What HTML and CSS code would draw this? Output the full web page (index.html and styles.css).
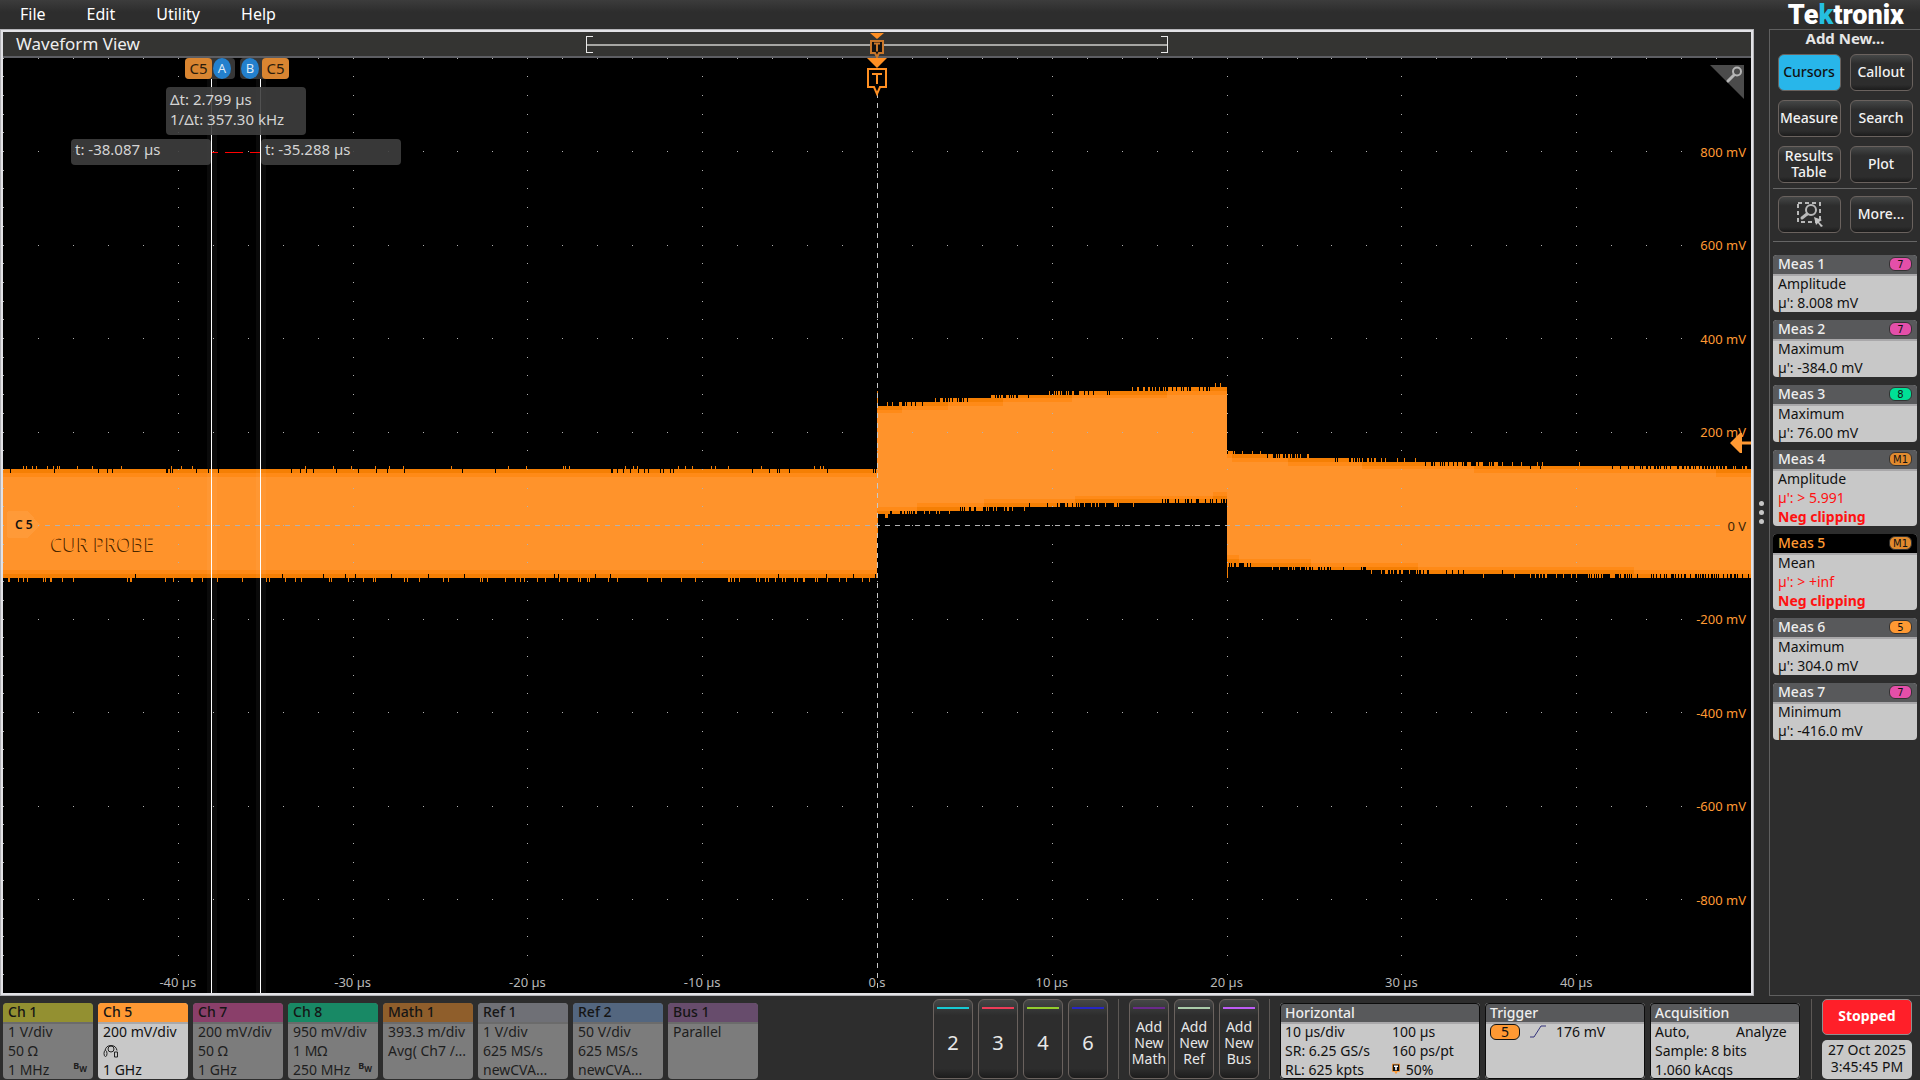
FILE: index.html
```html
<!DOCTYPE html>
<html lang="en">
<head>
    <meta charset="UTF-8">
    <meta name="viewport" content="width=device-width, initial-scale=1.0">
    <title>Waveform View</title>
    <link rel="stylesheet" href="styles.css">
</head>
<body>
    <header class="topbar">
        <nav class="menu">
            <button>File</button>
            <button>Edit</button>
            <button>Utility</button>
            <button>Help</button>
        </nav>
        <div class="logo">Te<span class="logo-k">k</span>tronix</div>
    </header>

    <main class="workspace">
        <section class="scope">
            <div class="scope-title">
                <h1>Waveform View</h1>
                <div class="record">
                    <svg class="record-trigger" width="16" height="26" viewBox="0 0 16 26">
                        <path d="M1 1h14l-7 6z" fill="#ff8f22"/>
                        <path d="M2 9h12v12h-4l-2 4l-2-4h-4z" fill="#111" stroke="#c9772a" stroke-width="2"/>
                        <path d="M5 11.500h6M8 11.500v8" stroke="#c9772a" stroke-width="2"/>
                    </svg>
                </div>
            </div>
            <div class="plot">
                <svg class="trace" viewBox="0 0 1748 935" preserveAspectRatio="none" shape-rendering="crispEdges">
                    <path id="wave-edge" fill="#f57f04"/>
                    <path id="wave-mid" fill="#ff8a17"/>
                    <path id="wave-core" fill="#ff932b"/>
                    <path d="M4 456q0-3 3-3h18l12 14l-12 13h-18q-3 0-3-3z" fill="#ff9a38"/>
                    <path id="grid-dots" fill="#b2b2b2"/>
                    <path d="M42 467.500H1718" stroke="#b2b2b2" stroke-dasharray="5 5"/>
                    <path d="M874.500 35V935" stroke="#c8c8c8" stroke-dasharray="5 5"/>
                    <path d="M204 0h10v935h-10zM253 0h10v935h-10z" fill="#fff" fill-opacity=".04"/>
                    <path d="M208.500 0v935M257.500 0v935" stroke="#fff"/>
                    <path d="M209 94.500h6M222 94.500h18M247 94.500h10" stroke="#f00"/>
                </svg>

                <div id="y-axis" class="y-axis"></div>
                <div id="x-axis" class="x-axis"></div>

                <span class="handle">C 5</span>
                <span class="trace-name">CUR PROBE</span>

                <div class="flag flag-a"><b>C5</b><i>A</i></div>
                <div class="flag flag-b"><i>B</i><b>C5</b></div>
                <div class="readout readout-delta">Δt: 2.799 µs<br>1/Δt: 357.30 kHz</div>
                <div class="readout readout-a">t: -38.087 µs</div>
                <div class="readout readout-b">t: -35.288 µs</div>

                <svg class="trigger-mark" width="20" height="40" viewBox="0 0 20 40">
                    <path d="M0 0h20l-10 10z" fill="#ff8f22"/>
                    <path d="M1 11h18v18h-6l-3 7l-3-7h-6z" fill="#000" stroke="#ff8f22" stroke-width="2"/>
                    <path d="M5 16h10M10 16v10" stroke="#ff8f22" stroke-width="2"/>
                </svg>
                <svg class="level-arrow" width="21" height="20" viewBox="0 0 21 20">
                    <path d="M0 10l10-10h2v8.500h9v3h-9v8.500h-2z" fill="#ff9933"/>
                </svg>
                <svg class="corner-zoom" width="34" height="34" viewBox="0 0 34 34">
                    <path d="M0 0h34v34z" fill="#4b4b4b"/>
                    <circle cx="27" cy="6.500" r="4" fill="none" stroke="#b5b5b5" stroke-width="2"/>
                    <path d="M24 10l-6 6" stroke="#b5b5b5" stroke-width="3" stroke-linecap="round"/>
                </svg>
            </div>
        </section>

        <div class="grip"><span></span><span></span><span></span></div>

        <aside class="panel">
            <h2>Add New...</h2>
            <div class="tools">
                <button class="btn active">Cursors</button>
                <button class="btn">Callout</button>
                <button class="btn">Measure</button>
                <button class="btn">Search</button>
                <button class="btn">Results Table</button>
                <button class="btn">Plot</button>
            </div>
            <div class="tools tools-more">
                <button class="btn" aria-label="Zoom">
                    <svg width="28" height="26" viewBox="0 0 28 26">
                        <path d="M3 2h22v19h-22z" fill="none" stroke="#b8b8b8" stroke-width="2" stroke-dasharray="4 3"/>
                        <circle cx="16" cy="9" r="5" fill="#2d2d2d" stroke="#b8b8b8" stroke-width="2"/>
                        <path d="M12 13l-5 4" stroke="#b8b8b8" stroke-width="3" stroke-linecap="round"/>
                        <path d="M19 16l8 3l-3 2l4 4l-2 1l-3-4l-2 2z" fill="#c4c4c4"/>
                    </svg>
                </button>
                <button class="btn">More...</button>
            </div>

            <div class="measurements">
                <section class="card">
                    <h3>Meas 1 <span class="pill pink">7</span></h3>
                    <p>Amplitude</p>
                    <p>µ': 8.008 mV</p>
                </section>
                <section class="card">
                    <h3>Meas 2 <span class="pill pink">7</span></h3>
                    <p>Maximum</p>
                    <p>µ': -384.0 mV</p>
                </section>
                <section class="card">
                    <h3>Meas 3 <span class="pill green">8</span></h3>
                    <p>Maximum</p>
                    <p>µ': 76.00 mV</p>
                </section>
                <section class="card">
                    <h3>Meas 4 <span class="pill math">M1</span></h3>
                    <p>Amplitude</p>
                    <p class="alert">µ': &gt; 5.991</p>
                    <p class="alert strong">Neg clipping</p>
                </section>
                <section class="card selected">
                    <h3>Meas 5 <span class="pill math">M1</span></h3>
                    <p>Mean</p>
                    <p class="alert">µ': &gt; +inf</p>
                    <p class="alert strong">Neg clipping</p>
                </section>
                <section class="card">
                    <h3>Meas 6 <span class="pill orange">5</span></h3>
                    <p>Maximum</p>
                    <p>µ': 304.0 mV</p>
                </section>
                <section class="card">
                    <h3>Meas 7 <span class="pill pink">7</span></h3>
                    <p>Minimum</p>
                    <p>µ': -416.0 mV</p>
                </section>
            </div>
        </aside>
    </main>

    <footer class="settings">
        <div class="channels">
            <section class="card off ch1">
                <h3>Ch 1</h3>
                <p>1 V/div</p>
                <p>50 Ω</p>
                <p>1 MHz <small>B<sub>W</sub></small></p>
            </section>
            <section class="card ch5">
                <h3>Ch 5</h3>
                <p>200 mV/div</p>
                <p>
                    <svg width="16" height="14" viewBox="0 0 16 14" fill="none" stroke="#222">
                        <path d="M2 6q1-5 6-5t6 5"/>
                        <circle cx="8" cy="4.500" r="3"/>
                        <ellipse cx="2.500" cy="9" rx="1.500" ry="3"/>
                        <path d="M11.500 7.500h3v5h-3z"/>
                    </svg>
                </p>
                <p>1 GHz</p>
            </section>
            <section class="card off ch7">
                <h3>Ch 7</h3>
                <p>200 mV/div</p>
                <p>50 Ω</p>
                <p>1 GHz</p>
            </section>
            <section class="card off ch8">
                <h3>Ch 8</h3>
                <p>950 mV/div</p>
                <p>1 MΩ</p>
                <p>250 MHz <small>B<sub>W</sub></small></p>
            </section>
            <section class="card off math1">
                <h3>Math 1</h3>
                <p>393.3 m/div</p>
                <p>Avg( Ch7 /...</p>
            </section>
            <section class="card off ref1">
                <h3>Ref 1</h3>
                <p>1 V/div</p>
                <p>625 MS/s</p>
                <p>newCVA...</p>
            </section>
            <section class="card off ref2">
                <h3>Ref 2</h3>
                <p>50 V/div</p>
                <p>625 MS/s</p>
                <p>newCVA...</p>
            </section>
            <section class="card off bus1">
                <h3>Bus 1</h3>
                <p>Parallel</p>
            </section>
        </div>

        <div class="add-group">
            <button class="btn tall c2">2</button>
            <button class="btn tall c3">3</button>
            <button class="btn tall c4">4</button>
            <button class="btn tall c6">6</button>
        </div>
        <div class="add-group">
            <button class="btn tall words cmath">Add New Math</button>
            <button class="btn tall words cref">Add New Ref</button>
            <button class="btn tall words cbus">Add New Bus</button>
        </div>

        <div class="system">
            <section class="card framed horizontal">
                <h3>Horizontal</h3>
                <div class="pair"><p>10 µs/div</p><p>100 µs</p></div>
                <div class="pair"><p>SR: 6.25 GS/s</p><p>160 ps/pt</p></div>
                <div class="pair">
                    <p>RL: 625 kpts</p>
                    <p>
                        <svg width="8" height="12" viewBox="0 0 10 13">
                            <path d="M0 0h10v10h-3l-2 3l-2-3h-3z" fill="#ff9933"/>
                            <path d="M1 1h8v8h-8z" fill="#111"/>
                            <path d="M2.500 3h5M5 3v5" stroke="#fff" stroke-width="2"/>
                        </svg>
                        50%
                    </p>
                </div>
            </section>
            <section class="card framed trigger">
                <h3>Trigger</h3>
                <div class="source">
                    <span class="source-pill">5</span>
                    <svg width="18" height="13" viewBox="0 0 18 13"><path d="M1 12h4l7-11h5" fill="none" stroke="#33337a"/></svg>
                    <p>176 mV</p>
                </div>
            </section>
            <section class="card framed acquisition">
                <h3>Acquisition</h3>
                <div class="pair"><p>Auto,</p><p>Analyze</p></div>
                <p>Sample: 8 bits</p>
                <p>1.060 kAcqs</p>
            </section>
        </div>

        <div class="status">
            <button class="stopped">Stopped</button>
            <div class="clock">27 Oct 2025<br>3:45:45 PM</div>
        </div>
    </footer>
    <script src="scope.js"></script>
</body>
</html>
```
FILE: styles.css
```css
* {
    box-sizing: border-box;
}
body {
    margin: 0;
    height: 100vh;
    display: flex;
    flex-direction: column;
    background-color: #2d2d2d;
    color: #eee;
    font-family: "Noto Sans", "Open Sans", sans-serif;
    font-size: 14px;
    line-height: 19px;
    overflow: hidden;
}
h1, h2, h3, p {
    margin: 0;
    font-size: inherit;
    font-weight: normal;
}
button {
    font: inherit;
    color: inherit;
    padding: 0;
    margin: 0;
}

/* top bar */
.topbar {
    height: 29px;
    flex: none;
    display: flex;
    justify-content: space-between;
    background: linear-gradient(#3c3c3c, #2d2d2d 12px);
}
.menu {
    display: flex;
    gap: 41px;
    padding-left: 20px;
}
.menu button {
    border: 0;
    padding-bottom: 1px;
    background: none;
    font-size: 16px;
    color: #fff;
}
.logo {
    padding-right: 16px;
    font-family: Roboto, sans-serif;
    font-weight: 900;
    font-size: 27px;
    line-height: 31px;
    color: #fff;
}
.logo-k {
    color: #25bfe0;
}

/* waveform view */
.workspace {
    flex: 1;
    min-height: 0;
    display: flex;
}
.scope {
    flex: 1;
    display: flex;
    flex-direction: column;
    border: 3px solid #e2e2e6;
    outline: 1px solid #b4b4b8;
    outline-offset: -1px;
}
.scope-title {
    position: relative;
    height: 26px;
    flex: none;
    padding-left: 13px;
    background-color: #343432;
    border-bottom: 2px solid #5d5e63;
}
.scope-title h1 {
    font-size: 17px;
    line-height: 24px;
}
.record {
    position: absolute;
    left: 50%;
    top: 4px;
    width: 582px;
    height: 17px;
    margin-left: -291px;
    border: 1px solid #e8e8e8;
    border-top: 0;
    border-bottom: 0;
    background:
        linear-gradient(#e8e8e8, #e8e8e8) 0 0 / 6px 1px no-repeat,
        linear-gradient(#e8e8e8, #e8e8e8) 0 100% / 6px 1px no-repeat,
        linear-gradient(#e8e8e8, #e8e8e8) 100% 0 / 6px 1px no-repeat,
        linear-gradient(#e8e8e8, #e8e8e8) 100% 100% / 6px 1px no-repeat,
        linear-gradient(#a6a6a3, #a6a6a3) 0 8px / 100% 2px no-repeat;
}
.record-trigger {
    position: absolute;
    left: 50%;
    top: -4px;
    margin-left: -8px;
}
.plot {
    position: relative;
    flex: 1;
    min-height: 0;
    background-color: #000;
    overflow: hidden;
}
.trace {
    display: block;
    width: 100%;
    height: 100%;
}
.y-axis, .x-axis {
    position: absolute;
    inset: 0;
    font-size: 13px;
    line-height: 16px;
}
.y-axis span {
    position: absolute;
    right: 5px;
    padding-bottom: 1px;
    transform: translateY(-50%);
    color: #ff9933;
}
.y-axis .zero {
    color: #3a2408;
}
.x-axis span {
    position: absolute;
    bottom: 3px;
    transform: translateX(-50%);
    color: #b8b8b8;
}
.handle {
    position: absolute;
    left: 12px;
    top: 50%;
    font-size: 12px;
    font-weight: 600;
    line-height: 18px;
    margin-top: -10px;
    color: #111;
}
.trace-name {
    position: absolute;
    left: 48px;
    top: 50%;
    margin-top: 6px;
    font-size: 19px;
    line-height: 24px;
    color: #ff932b;
    text-shadow: -1px 1px 0 #4a2800;
}

/* cursors */
.flag {
    position: absolute;
    top: 0;
    display: flex;
    height: 21px;
    border-radius: 4px;
    background-color: #373737;
    line-height: 20px;
    text-align: center;
}
.flag-a {
    left: 182px;
    padding-right: 3px;
}
.flag-b {
    left: 237px;
}
.flag b {
    width: 27px;
    border-radius: 4px;
    background-color: #d98531;
    color: #2b1c0c;
    font-size: 15px;
    font-weight: normal;
}
.flag i {
    width: 18px;
    margin: 0 1px;
    border-radius: 50%;
    background-color: #2380cd;
    font-size: 13px;
    font-style: normal;
    color: #dceaf6;
}
.flag-b i {
    margin-right: 3px;
}
.readout {
    position: absolute;
    width: 140px;
    height: 26px;
    padding: 0 4px;
    border-radius: 4px;
    background-color: rgba(62, 62, 62, 0.9);
    color: #d4d4d4;
    font-size: 15px;
    line-height: 20px;
}
.readout-delta {
    left: 163px;
    top: 29px;
    height: 48px;
    padding-top: 2px;
}
.readout-a {
    left: 68px;
    top: 81px;
}
.readout-b {
    left: 258px;
    top: 81px;
}
.trigger-mark {
    position: absolute;
    left: 50%;
    top: 0;
    margin-left: -10px;
}
.level-arrow {
    position: absolute;
    right: 0;
    top: 40%;
    margin-top: 1px;
}
.corner-zoom {
    position: absolute;
    right: 7px;
    top: 7px;
}

.grip {
    width: 15px;
    display: flex;
    flex-direction: column;
    align-items: center;
    justify-content: center;
    gap: 4px;
}
.grip span {
    width: 5px;
    height: 5px;
    border-radius: 50%;
    background-color: #c6c6c6;
}

/* right panel */
.panel {
    width: 151px;
    border: 1px solid #5f5f5f;
    border-right: 0;
    padding: 0 3px;
}
.panel h2 {
    height: 19px;
    font-size: 15px;
    font-weight: 700;
    line-height: 17px;
    text-align: center;
    color: #e6e6e6;
}
.tools {
    display: grid;
    grid-template-columns: 63px 63px;
    gap: 9px;
    justify-content: center;
    padding: 5px 0;
    border-bottom: 1px solid #666;
}
.tools-more {
    padding: 7px 0 8px;
}
.btn {
    height: 37px;
    padding-bottom: 2px;
    border: 1px solid #6a625e;
    border-radius: 6px;
    background: linear-gradient(#454747, #2d2d2d 25%, #2d2d2d 85%, #1c1c1c);
    font-weight: 500;
    line-height: 16px;
    color: #f2f2f2;
}
.btn svg {
    display: block;
    margin: 0 auto;
}
.btn.active {
    background: #28b6ea;
    color: #111;
}
.measurements {
    display: flex;
    flex-direction: column;
    gap: 8px;
    padding-top: 13px;
}

/* readout cards */
.card {
    border-radius: 4px;
    background-color: #c8c8c8;
    color: #111;
    overflow: hidden;
    white-space: nowrap;
}
/* the rule under the header shares its 2px with the first text line */
.card h3 {
    display: flex;
    justify-content: space-between;
    align-items: center;
    height: 21px;
    margin-bottom: -2px;
    padding: 0 5px 1px;
    border-bottom: 2px solid #a9a8aa;
    background-color: #58595b;
    color: #eee;
    font-weight: 500;
    line-height: 18px;
}
.card p {
    padding-left: 5px;
    line-height: 19px;
}
.card.selected h3 {
    background-color: #000;
    color: #ff9933;
}
.card .alert {
    color: #ff1111;
}
.strong {
    font-weight: 700;
}
.pill {
    width: 23px;
    height: 14px;
    border: 1px solid #333;
    border-radius: 6px;
    font-family: "DejaVu Sans", sans-serif;
    font-size: 10px;
    line-height: 13px;
    text-align: center;
    color: #111;
}
.pink {
    background-color: #e44fa9;
}
.green {
    background-color: #00e096;
}
.math {
    background-color: #e08a2e;
}
.orange {
    background-color: #ff9933;
}

/* settings bar */
.settings {
    flex: none;
    display: flex;
    padding: 3px 8px 1px 3px;
}
.channels {
    display: flex;
    gap: 5px;
    padding-top: 4px;
    margin-right: auto;
}
.channels .card {
    width: 90px;
    height: 76px;
}
.channels .card h3 {
    color: #151515;
}
.channels svg {
    display: block;
    padding-top: 2px;
    height: 19px;
}
.off {
    background-color: #7c7c7c;
    color: #1e1e1e;
}
.card.off h3 {
    border-bottom-color: #6b6b6b;
}
.card small {
    float: right;
    margin-right: 6px;
    font-size: 9px;
    font-weight: 700;
    line-height: 12px;
}
.card sub {
    font-size: 8px;
    line-height: 1;
}
.card.ch1 h3 { background-color: #939031; }
.card.ch5 h3 { background-color: #ff9933; }
.card.ch7 h3 { background-color: #8a3f6a; }
.card.ch8 h3 { background-color: #188965; }
.card.math1 h3 { background-color: #8f5e2b; }
.card.ref1 h3 { background-color: #6f7076; }
.card.ref2 h3 { background-color: #53667f; }
.card.bus1 h3 { background-color: #674c6c; }

.add-group {
    display: flex;
    gap: 5px;
    padding-right: 10px;
    margin-right: 10px;
    border-right: 1px solid #5c5855;
}
.tall {
    width: 40px;
    height: 80px;
    position: relative;
    font-size: 20px;
    font-weight: normal;
    padding-top: 9px;
    color: #e8e8e8;
    background: linear-gradient(#454747, #2d2d2d 20%, #2d2d2d 88%, #1c1c1c);
}
.tall::before {
    content: "";
    position: absolute;
    left: 3px;
    right: 3px;
    top: 7px;
    height: 2px;
}
.words {
    font-size: 14px;
    line-height: 16px;
}
.c2::before { background-color: #17c9d3; }
.c3::before { background-color: #ec3c58; }
.c4::before { background-color: #93cc2c; }
.c6::before { background-color: #2726c4; }
.cmath::before { background-color: #6a2a8c; }
.cref::before { background-color: #a9cba9; }
.cbus::before { background-color: #bd5cf5; }

.system {
    display: flex;
    gap: 5px;
    padding-top: 4px;
    padding-right: 11px;
    margin-right: 10px;
    border-right: 1px solid #5c5855;
}
.framed {
    height: 76px;
    outline: 1px solid #0c0c0c;
    outline-offset: -1px;
}
.card.framed h3 {
    padding-bottom: 0;
}
.horizontal {
    width: 200px;
}
.trigger {
    width: 160px;
}
.acquisition {
    width: 150px;
}
.pair {
    display: grid;
    grid-template-columns: 107px 1fr;
}
.pair svg {
    margin-right: 2px;
}
.acquisition .pair {
    grid-template-columns: 81px 1fr;
}
.source {
    display: flex;
    align-items: center;
    height: 19px;
    padding-left: 5px;
    gap: 9px;
}
.source p {
    padding-left: 0;
}
.source-pill {
    width: 30px;
    height: 16px;
    border: 1px solid #111;
    border-radius: 6px;
    background-color: #ff9933;
    line-height: 14px;
    text-align: center;
}
.status {
    width: 90px;
    display: flex;
    flex-direction: column;
    gap: 5px;
}
.stopped {
    height: 36px;
    padding-bottom: 3px;
    border: 1px solid #8f8f8f;
    border-radius: 5px;
    background-color: #ff1f29;
    color: #fff;
    font-weight: 700;
}
.clock {
    height: 39px;
    border-radius: 5px;
    background-color: #c8c8c8;
    color: #111;
    line-height: 17px;
    padding-top: 1px;
    text-align: center;
}
```
FILE: scope.js
```js
const WIDTH = 1748;
const HEIGHT = 935;
const ZERO_X = 874;
const ZERO_Y = HEIGHT / 2;
const DIV_X = WIDTH / 10;
const DIV_Y = HEIGHT / 10;
const STEP = DIV_Y / 25;   // one ADC level

// small seeded generator so the noise is the same on every load
let seed = 20251027;
function rand() {
    seed = (seed * 1103515245 + 12345) % 2147483648;
    return seed / 2147483648;
}
function noise() {
    return (rand() + rand() + rand() - 1.5) * 0.6;
}

// mean upper and lower level of the band at column x
function envelope(x) {
    const t = x - ZERO_X;
    if (t < 0) return [15, -14.1];
    if (t < 350) {
        const rise = 1 - Math.exp(-t / 270);
        return [31.9 + 7 * rise, 2.8 + 5.2 * rise];
    }
    const fall = Math.exp(-(t - 350) / 220);
    return [15 + 4.6 * fall, -14.1 + 3.8 * fall];
}

function column(x, top, bottom) {
    const y1 = (ZERO_Y - top * STEP).toFixed(1);
    const h = ((top - bottom) * STEP).toFixed(1);
    return `M${x} ${y1}h1v${h}h-1z`;
}

let edge = '', mid = '', core = '';
for (let x = 0; x < WIDTH; x++) {
    const [top, bottom] = envelope(x);
    let hi = Math.round(top + noise());
    let lo = Math.round(bottom + noise());
    if (x === ZERO_X) { hi = 36; lo = -3; }
    if (x === ZERO_X + 350) lo = -14;
    edge += column(x, hi, lo);
    mid += column(x, Math.round(top) - 1, Math.round(bottom) + 1);
    core += column(x, Math.round(top) - 2, Math.round(bottom) + 2);
}
document.getElementById('wave-edge').setAttribute('d', edge);
document.getElementById('wave-mid').setAttribute('d', mid);
document.getElementById('wave-core').setAttribute('d', core);

function dot(x, y) {
    return `M${Math.round(x)} ${Math.floor(y)}h1v1h-1z`;
}

// rows and columns of dots, five to a division
let dots = '';
for (let row = 0; row < 10; row++) {
    for (let i = 0; i < 50; i++) {
        dots += dot(i * DIV_X / 5, row * DIV_Y);
    }
}
for (let col = 0; col < 10; col++) {
    for (let i = 0; i < 50; i++) {
        dots += dot(col * DIV_X, i * DIV_Y / 5);
    }
}
document.getElementById('grid-dots').setAttribute('d', dots);

const yAxis = document.getElementById('y-axis');
for (let mv = 800; mv >= -800; mv -= 200) {
    const label = document.createElement('span');
    label.textContent = mv === 0 ? '0 V' : mv + ' mV';
    if (mv === 0) label.className = 'zero';
    label.style.top = (50 - mv / 20) + '%';
    yAxis.appendChild(label);
}

const xAxis = document.getElementById('x-axis');
for (let us = -40; us <= 40; us += 10) {
    const label = document.createElement('span');
    label.textContent = us === 0 ? '0 s' : us + ' µs';
    label.style.left = (50 + us) + '%';
    xAxis.appendChild(label);
}
```
